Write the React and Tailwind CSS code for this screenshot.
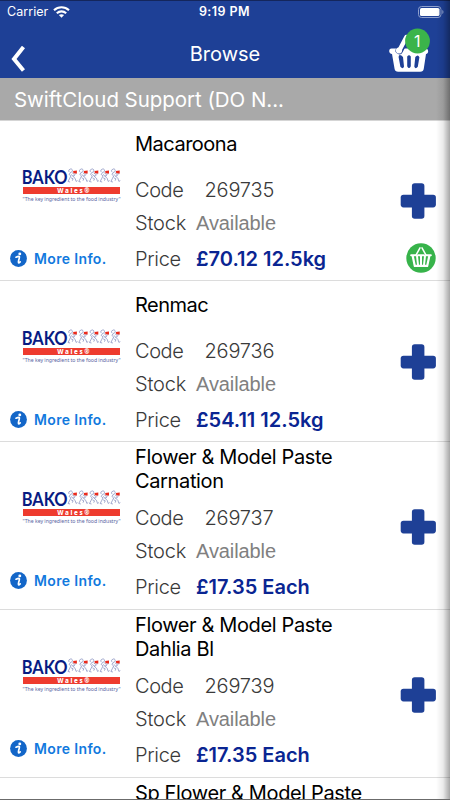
import { clsx } from 'clsx'

const PRODUCTS = [
  { code: '269735', name: ['Macaroona'], price: '£70.12 12.5kg', inBasket: true, box: 'h-[160px]' },
  { code: '269736', name: ['Renmac'], price: '£54.11 12.5kg', box: 'h-[161px] pt-px' },
  { code: '269737', name: ['Flower & Model Paste', 'Carnation'], price: '£17.35 Each', box: 'h-[168px]' },
  { code: '269739', name: ['Flower & Model Paste', 'Dahlia Bl'], price: '£17.35 Each', box: 'h-[168px]' },
  { code: '269740', name: ['Sp Flower & Model Paste', 'White'], price: '£17.35 Each', box: 'h-[168px]' },
]

function StatusBar() {
  return (
    <div className="flex h-[23px] items-center justify-between border-t border-[#14265c] pl-[7px] pr-[6px] text-white">
      <div className="flex w-[118px] items-center gap-[5px]">
        <span className="text-[12.5px] leading-none tracking-[0.05px]">Carrier</span>
        <svg width="17" height="12" viewBox="0 0 17 12" fill="none" stroke="#fff" strokeWidth="2.1">
          <path d="M1 4.3C5.2 0.3 11.8 0.3 16 4.3" />
          <path d="M3.8 7.2C6.5 4.7 10.5 4.7 13.2 7.2" />
          <path d="M8.5 11.8L5.9 9.1C7.4 7.9 9.6 7.9 11.1 9.1Z" fill="#fff" stroke="none" />
        </svg>
      </div>
      <span className="text-[12.5px] font-semibold leading-none tracking-[0.45px]">9:19 PM</span>
      <div className="flex w-[120px] justify-end">
        <svg width="26" height="12" viewBox="0 0 26 12">
          <rect x="0.5" y="0.5" width="22.5" height="11" rx="3" fill="none" stroke="#8fa0cd" />
          <rect x="2" y="2" width="19.5" height="8" rx="1.6" fill="#fff" />
          <path d="M24.3 4v4c1.6-.6 1.6-3.4 0-4Z" fill="#8fa0cd" />
        </svg>
      </div>
    </div>
  )
}

function NavBar() {
  return (
    <div className="flex h-[55px] justify-between pl-[11px] pr-[19px] text-white">
      <div className="w-[60px] pt-[23px]">
        <svg width="14" height="26" viewBox="0 0 14 26" fill="none" stroke="#fff" strokeWidth="4">
          <path d="M12.5 1L3 12.9L12.5 24.5" />
        </svg>
      </div>
      <h1 className="ml-[8px] pt-[17px] text-[20px] leading-[28px]">Browse</h1>
      <div className="flex w-[60px] justify-end pt-[5px]">
        <svg width="44" height="45" viewBox="0 0 44 45">
          <path
            fill="#fff"
            fillRule="evenodd"
            d="M4.5 20.5H38.5C42 20.5 42 25.8 39 26L36.8 40.5Q36.4 43.8 33.2 43.8H11.2Q8 43.8 7.5 40.5L5 26C1.5 25.8 1.3 20.5 4.5 20.5ZM14.4 27.5Q11.8 26 11.6 29L13.4 38.8Q16 41.8 17 38.6L16 29ZM20.2 28.5V38.2Q22 42 23.8 38.2V28.5Q22 25.8 20.2 28.5ZM28.3 29L27.3 38.6Q28.4 41.8 30.8 38.8L32.4 29.2Q31 25.8 28.3 29Z"
          />
          <path d="M12.3 22.5L19.4 9" fill="none" stroke="#1e4096" strokeWidth="7.5" strokeLinecap="round" />
          <path d="M12.3 22.5L19.4 9" fill="none" stroke="#fff" strokeWidth="4.4" strokeLinecap="round" />
          <circle cx="12" cy="22.5" r="3.1" fill="#fff" />
          <circle cx="30.5" cy="13" r="12.4" fill="#3bb44a" />
          <text x="30.2" y="18.6" fill="#fff" fontSize="16" textAnchor="middle">1</text>
        </svg>
      </div>
    </div>
  )
}

// One of the five flag-carrying bakers beside the brand name
function Baker({ x }) {
  return (
    <g transform={`translate(${x} 0)`}>
      <g fill="none" stroke="#6470ac" strokeWidth="0.6" strokeLinejoin="round">
        <path d="M2.1 4.2C.8 3.5 1 1.5 2.5 1.3C3.2.5 5 1 4.9 2.5C4.8 3.8 3.9 4.4 2.9 4.4" />
        <path d="M3 4.5L1.6 6.4L3.4 8L2.2 10.3L.6 13.5M4.6 4.7L6.6 6.3L9 5.6M3.4 6.4L5.3 8L7.4 7.5M5.2 8L7.6 10.4L8.6 13.4M3.5 9.8L5.6 10.8L4.8 12.7" />
        <path d="M.6 13.5L2.6 14M8.6 13.4L10 12.6" />
      </g>
      <path d="M5.6 3L9.4 2.6V5.4L5.9 5.2Z" fill="#ea2a1c" />
    </g>
  )
}

function BakoLogo() {
  return (
    <svg width="100" height="36" viewBox="0 0 100 36" className="overflow-visible" fontFamily="Lato, sans-serif">
      <text
        x="-0.3"
        y="15.7"
        fontSize="19"
        fontWeight="700"
        fill="#081b83"
        textLength="45.8"
        lengthAdjust="spacingAndGlyphs"
      >
        BAKO
      </text>
      {[45.5, 56.2, 66.9, 77.6, 88.3].map((x) => (
        <Baker key={x} x={x} />
      ))}
      <rect x="1" y="19" width="97" height="7" fill="#ee3b2e" />
      <text x="35.3" y="24.8" fontSize="6.3" fontWeight="800" letterSpacing="1.6" fill="#fff" fontFamily="'Noto Sans', sans-serif">
        Wales®
      </text>
      <text x="0.5" y="32.8" fontSize="5.2" fill="#5b659f" textLength="98" fontFamily="'Noto Sans', sans-serif">
        "The key ingredient to the food industry"
      </text>
    </svg>
  )
}

function InfoIcon() {
  return (
    <svg width="17" height="17" viewBox="0 0 17 17">
      <circle cx="8.5" cy="8.5" r="8.4" fill="#1366c8" />
      <circle cx="9.8" cy="3.9" r="1.45" fill="#fff" />
      <path
        d="M6 7.2C7.4 6.6 8.8 6.3 9.3 6.5C9.9 6.8 9.3 8.1 8.9 9.4C8.5 10.9 8 12.4 8.5 12.8C8.9 13 9.6 12.4 10.2 11.8"
        fill="none"
        stroke="#fff"
        strokeWidth="1.7"
        strokeLinecap="round"
      />
    </svg>
  )
}

function PlusIcon() {
  return (
    <svg width="36" height="36" viewBox="0 0 36 36" fill="#1e4096">
      <rect x="11.9" y="0.2" width="12.5" height="35.6" rx="2.8" />
      <rect x="0.7" y="11.7" width="35.2" height="12.7" rx="2.8" />
    </svg>
  )
}

function BasketBadge() {
  return (
    <svg width="30" height="30" viewBox="0 0 30 30">
      <circle cx="15" cy="15" r="14.7" fill="#37b34a" />
      <g fill="none" stroke="#fff" strokeLinecap="round">
        <path d="M10 12.2L14 4.8M20 12.2L16 4.8" strokeWidth="1.5" />
        <path d="M5.2 12.2H9.6M12 12.2H18M20.4 12.2H24.8" strokeWidth="2.1" />
        <path d="M6.7 13L8.8 22.9H21.2L23.3 13" strokeWidth="2.2" strokeLinejoin="round" />
        <path d="M11 13L12 22M15 13V22M19 13L18 22" strokeWidth="2" />
      </g>
    </svg>
  )
}

function ProductRow({ product }) {
  const twoLines = product.name.length > 1

  return (
    <li className={clsx('flex shrink-0 border-b border-[#dcdcdc]', product.box)}>
      <div className="flex w-[135px] shrink-0 flex-col pl-[9px]">
        <div className={clsx('ml-[13px] h-[36px]', twoLines ? 'mt-[48px]' : 'mt-[47px]')}>
          <BakoLogo />
        </div>
        <button className="mt-[45.5px] flex items-center gap-[7px] pl-[1px]">
          <InfoIcon />
          <span className="text-[14px] font-semibold leading-[17px] tracking-[0.35px] text-[#1279de]">More Info.</span>
        </button>
      </div>
      <div className="flex-1 text-[20px] font-[350] text-[#3a3a3a]">
        <h2
          className={clsx(
            'mb-[5px] flex flex-col justify-center whitespace-nowrap font-normal leading-[23.5px] text-black',
            twoLines ? 'h-[55px] tracking-[-0.37px]' : 'h-[48px] tracking-[-0.5px]',
          )}
        >
          {product.name.map((line) => (
            <span key={line}>{line}</span>
          ))}
        </h2>
        <div className="flex h-[32px] items-center">
          <span className="w-[69.5px] tracking-[-0.4px]">Code</span>
          <span className="tracking-[-0.2px]">{product.code}</span>
        </div>
        <div className="flex h-[33px] items-center">
          <span className="w-[61px] tracking-[-0.2px]">Stock</span>
          <span className="font-['Liberation_Sans'] font-normal tracking-[-0.1px] text-[#808080]">Available</span>
        </div>
        <div className="mt-[3px] flex h-[34px] items-center">
          <span className="w-[61px] tracking-[-0.3px]">Price</span>
          <span className="whitespace-nowrap font-semibold text-[#0a2592]">{product.price}</span>
        </div>
      </div>
      <div className="flex w-[50px] shrink-0 flex-col">
        <div className={twoLines ? 'pt-[67px]' : 'pt-[62px]'}>
          <PlusIcon />
        </div>
        {product.inBasket && (
          <div className="mt-[24px] pl-[6px]">
            <BasketBadge />
          </div>
        )}
      </div>
    </li>
  )
}

export default function App() {
  return (
    <div className="relative flex h-[800px] w-[450px] flex-col overflow-hidden border-b border-[#6b6b6b] bg-white font-[Inter,sans-serif]">
      <header className="shrink-0 bg-[#1e4096]">
        <StatusBar />
        <NavBar />
      </header>
      <div className="h-[43px] shrink-0 border-b border-[#d5d5d5] bg-[#a9a9a9] pl-[14px]">
        <p className="text-[20.5px] leading-[43px] tracking-[-0.05px] text-white">SwiftCloud Support (DO N...</p>
      </div>
      <ul className="flex flex-1 flex-col overflow-hidden">
        {PRODUCTS.map((product) => (
          <ProductRow key={product.code} product={product} />
        ))}
      </ul>
      {/* Edge shadow of the side panel */}
      <div className="pointer-events-none absolute inset-y-0 right-0 w-[14px] bg-linear-to-r from-transparent via-black/8 to-black/35" />
    </div>
  )
}
